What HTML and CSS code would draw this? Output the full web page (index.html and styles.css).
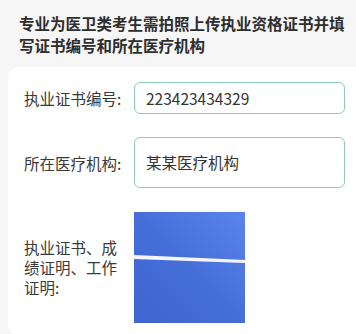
FILE: index.html
```html
<!DOCTYPE html>
<html lang="zh-CN">
<head>
    <meta charset="UTF-8">
    <meta name="viewport" content="width=device-width, initial-scale=1.0">
    <title>上传执业资格证书</title>
    <link rel="stylesheet" href="styles.css">
</head>
<body>
    <p class="notice">专业为医卫类考生需拍照上传执业资格证书并填写证书编号和所在医疗机构</p>
    <div class="card">
        <div class="row">
            <div class="label">执业证书编号:</div>
            <div class="field">223423434329</div>
        </div>
        <div class="row">
            <div class="label">所在医疗机构:</div>
            <div class="field tall">某某医疗机构</div>
        </div>
        <div class="row">
            <div class="label">执业证书、成绩证明、工作证明:</div>
            <div class="photo">
                <svg width="111" height="111" viewBox="0 0 111 111">
                    <defs>
                        <linearGradient id="blue" x1="1" y1="0" x2="0" y2="1">
                            <stop offset="0" stop-color="#5a85ea"/>
                            <stop offset="0.5" stop-color="#466ed9"/>
                            <stop offset="1" stop-color="#3f65cf"/>
                        </linearGradient>
                    </defs>
                    <rect width="111" height="111" fill="url(#blue)"/>
                    <polygon points="0,43 111,48 111,51 0,47" fill="#f4f6fb"/>
                </svg>
            </div>
        </div>
    </div>
</body>
</html>
```

FILE: styles.css
```css
body {
    margin: 0;
    background-color: #f6f6f6;
    font-family: "Noto Sans CJK SC", "Noto Sans", sans-serif;
    color: #333;
}

.notice {
    margin: 0;
    padding: 12px 10px 0 19px;
    font-size: 15.5px;
    font-weight: bold;
    line-height: 22px;
    color: #2e2e2e;
}

.card {
    margin: 11px 0 0 8px;
    padding: 15px 11px 12px 16px;
    background-color: #fff;
    border-radius: 10px 0 0 10px;
}

.row {
    display: flex;
    align-items: center;
    margin-bottom: 23px;
}

.row:last-child {
    margin-bottom: 0;
}

.label {
    width: 100px;
    flex-shrink: 0;
    margin-right: 10px;
    font-size: 15.5px;
    line-height: 20px;
    color: #3a3a3a;
}

.field {
    flex: 1;
    height: 30px;
    padding-left: 11px;
    border: 1px solid #8acbbb;
    border-radius: 6px;
    font-size: 15.5px;
    line-height: 30px;
    color: #333;
}

.field.tall {
    height: 49px;
    line-height: 49px;
}

.photo {
    width: 111px;
    height: 111px;
    margin-top: 1px;
}

.photo svg {
    display: block;
}
```
